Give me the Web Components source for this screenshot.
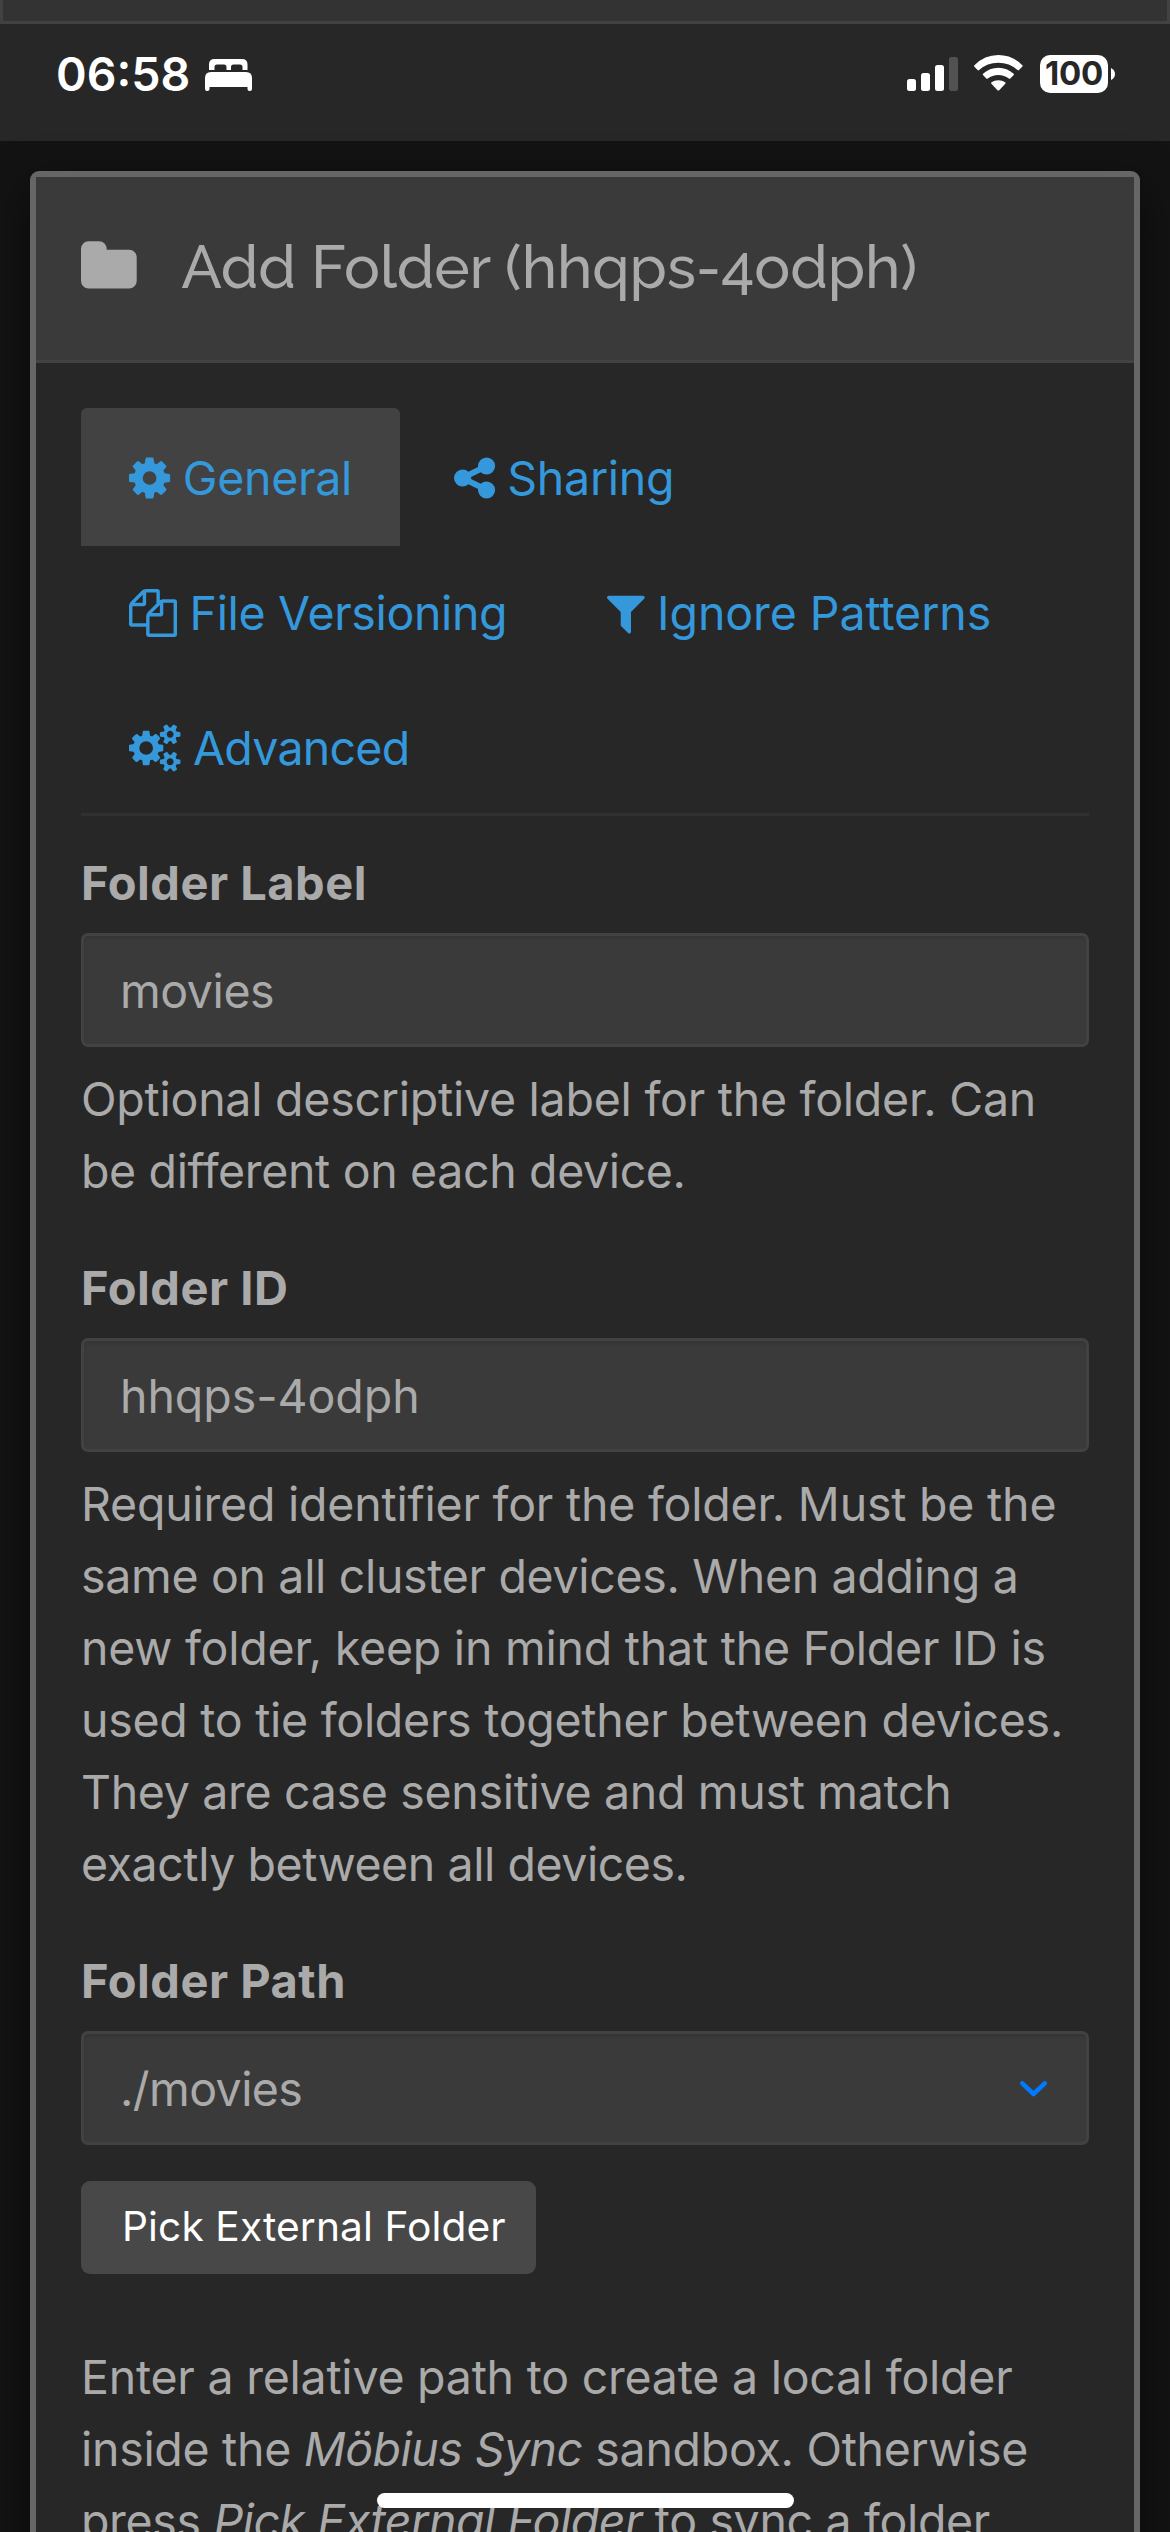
<!DOCTYPE html>
<html lang="en">
<head>
<meta charset="utf-8">
<title>Add Folder</title>
<style>
html,body{margin:0;padding:0;background:#131313;}
body{width:1170px;height:2532px;overflow:hidden;font-family:Inter,"Liberation Sans",sans-serif;font-size:46.5px;line-height:72px;color:#aaa;}
</style>
</head>
<body>
<app-screen>
  <status-bar slot="status" time="06:58" battery="100"></status-bar>
  <modal-dialog>
    <modal-title slot="title">Add Folder (hhqps-4odph)</modal-title>
    <tab-list>
      <tab-item icon="cog" active style="--ls:-.28px">General</tab-item>
      <tab-item icon="share" style="--ls:-.27px">Sharing</tab-item>
      <tab-item icon="files" style="--ls:-.35px;margin-right:4px">File Versioning</tab-item>
      <tab-item icon="filter" style="--ls:-.08px">Ignore Patterns</tab-item>
      <tab-item icon="cogs" style="--ls:-.75px">Advanced</tab-item>
    </tab-list>
    <form-group label="Folder Label">
      <text-field style="letter-spacing:-.42px">movies</text-field>
      <help-line slot="help" style="letter-spacing:-.25px">Optional descriptive label for the folder. Can</help-line>
      <help-line slot="help" style="letter-spacing:-.36px">be different on each device.</help-line>
    </form-group>
    <form-group label="Folder ID">
      <text-field style="letter-spacing:-.06px">hhqps-4odph</text-field>
      <help-line slot="help" style="letter-spacing:-.22px">Required identifier for the folder. Must be the</help-line>
      <help-line slot="help" style="letter-spacing:-.33px">same on all cluster devices. When adding a</help-line>
      <help-line slot="help" style="letter-spacing:-.23px">new folder, keep in mind that the Folder ID is</help-line>
      <help-line slot="help" style="letter-spacing:-.28px">used to tie folders together between devices.</help-line>
      <help-line slot="help" style="letter-spacing:-.32px">They are case sensitive and must match</help-line>
      <help-line slot="help" style="letter-spacing:-.44px">exactly between all devices.</help-line>
    </form-group>
    <form-group label="Folder Path">
      <text-field dropdown style="letter-spacing:-.57px">./movies</text-field>
      <push-button>Pick External Folder</push-button>
      <help-line slot="help" style="letter-spacing:-.24px">Enter a relative path to create a local folder</help-line>
      <help-line slot="help" style="letter-spacing:-.3px">inside the <i style="letter-spacing:-.55px">Möbius Sync</i> sandbox. Otherwise</help-line>
      <help-line slot="help" style="letter-spacing:-.35px">press <i style="letter-spacing:-.48px">Pick External Folder</i> to sync a folder</help-line>
    </form-group>
  </modal-dialog>
  <home-indicator slot="home"></home-indicator>
</app-screen>
<script>
const define = (name, render) => customElements.define(name, class extends HTMLElement {
  constructor() { super(); this.attachShadow({ mode: 'open' }); }
  connectedCallback() { this.shadowRoot.innerHTML = render(this); }
});

// Icons on a 1792-unit em, baseline at 1536: [x origin, advance, path]
const ICONS = {
  folder: [64, 1664, 'M1728 608v704q0 92-66 158t-158 66h-1216q-92 0-158-66t-66-158v-960q0-92 66-158t158-66h320q92 0 158 66t66 158v32h672q92 0 158 66t66 158z'],
  cog: [128, 1536, 'M1152 896q0-106-75-181t-181-75-181 75-75 181 75 181 181 75 181-75 75-181zm512-109v222q0 12-8 23t-20 13l-185 28q-19 54-39 91 35 50 107 138 10 12 10 25t-9 23q-27 37-99 108t-94 71q-12 0-26-9l-138-108q-44 23-91 38-16 136-29 186-7 28-36 28h-222q-14 0-24.5-8.5t-11.5-21.5l-28-184q-49-16-90-37l-141 107q-10 9-25 9-14 0-25-11-126-114-165-168-7-10-7-23 0-12 8-23 15-21 51-66.5t54-70.5q-27-50-41-99l-183-27q-13-2-21-12.5t-8-23.5v-222q0-12 8-23t19-13l186-28q14-46 39-92-40-57-107-138-10-12-10-24 0-10 9-23 26-36 98.5-107.5t94.5-71.5q13 0 26 10l138 107q44-23 91-38 16-136 29-186 7-28 36-28h222q14 0 24.5 8.5t11.5 21.5l28 184q49 16 90 37l142-107q9-9 24-9 13 0 25 10 129 119 165 170 7 8 7 22 0 12-8 23-15 21-51 66.5t-54 70.5q26 50 41 98l183 28q13 2 21 12.5t8 23.5z'],
  share: [128, 1536, 'M1344 1024q133 0 226.5 93.5t93.5 226.5-93.5 226.5-226.5 93.5-226.5-93.5-93.5-226.5q0-12 2-34l-360-180q-92 86-218 86-133 0-226.5-93.5t-93.5-226.5 93.5-226.5 226.5-93.5q126 0 218 86l360-180q-2-22-2-34 0-133 93.5-226.5t226.5-93.5 226.5 93.5 93.5 226.5-93.5 226.5-226.5 93.5q-126 0-218-86l-360 180q2 22 2 34t-2 34l360 180q92-86 218-86z'],
  files: [0, 1792, 'M1696 384q40 0 68 28t28 68v1216q0 40-28 68t-68 28h-960q-40 0-68-28t-28-68v-288h-544q-40 0-68-28t-28-68v-672q0-40 20-88t48-76l408-408q28-28 76-48t88-20h416q40 0 68 28t28 68v328q68-40 128-40h416zm-544 213l-299 299h299v-299zm-640-384l-299 299h299v-299zm196 647l316-316v-416h-384v416q0 40-28 68t-68 28h-416v640h512v-256q0-40 20-88t48-76zm956 804v-1152h-384v416q0 40-28 68t-68 28h-416v640h896z'],
  filter: [192, 1408, 'M1595 295q17 41-14 70l-493 493v742q0 42-39 59-13 5-25 5-27 0-45-19l-256-256q-19-19-19-45v-486l-493-493q-31-29-14-70 17-39 59-39h1280q42 0 59 39z'],
  cogs: [0, 1920, 'M896 896q0-106-75-181t-181-75-181 75-75 181 75 181 181 75 181-75 75-181zm768 512q0-52-38-90t-90-38-90 38-38 90q0 53 37.5 90.5t90.5 37.5 90.5-37.5 37.5-90.5zm0-1024q0-52-38-90t-90-38-90 38-38 90q0 53 37.5 90.5t90.5 37.5 90.5-37.5 37.5-90.5zm-384 421v185q0 10-7 19.5t-16 10.5l-155 24q-11 35-32 76 34 48 90 115 7 11 7 20 0 12-7 19-23 30-82.5 89.5t-78.5 59.5q-11 0-21-7l-115-90q-37 19-77 31-11 108-23 155-7 24-30 24h-186q-11 0-20-7.5t-10-17.5l-23-153q-34-10-75-31l-118 89q-7 7-20 7-11 0-21-8-144-133-144-160 0-9 7-19 10-14 41-53t47-61q-23-44-35-82l-152-24q-10-1-17-9.5t-7-19.5v-185q0-10 7-19.5t16-10.5l155-24q11-35 32-76-34-48-90-115-7-11-7-20 0-12 7-20 22-30 82-89t79-59q11 0 21 7l115 90q34-18 77-32 11-108 23-154 7-24 30-24h186q11 0 20 7.5t10 17.5l23 153q34 10 75 31l118-89q8-7 20-7 11 0 21 8 144 133 144 160 0 8-7 19-12 16-42 54t-45 60q23 48 34 82l152 23q10 2 17 10.5t7 19.5zm640 533v140q0 16-149 31-12 27-30 52 51 113 51 138 0 4-4 7-122 71-124 71-8 0-46-47t-52-68q-20 2-30 2t-30-2q-14 21-52 68t-46 47q-2 0-124-71-4-3-4-7 0-25 51-138-18-25-30-52-149-15-149-31v-140q0-16 149-31 13-29 30-52-51-113-51-138 0-4 4-7 4-2 35-20t59-34 30-16q8 0 46 46.5t52 67.5q20-2 30-2t30 2q51-71 92-112l6-2q4 0 124 70 4 3 4 7 0 25-51 138 17 23 30 52 149 15 149 31zm0-1024v140q0 16-149 31-12 27-30 52 51 113 51 138 0 4-4 7-122 71-124 71-8 0-46-47t-52-68q-20 2-30 2t-30-2q-14 21-52 68t-46 47q-2 0-124-71-4-3-4-7 0-25 51-138-18-25-30-52-149-15-149-31v-140q0-16 149-31 13-29 30-52-51-113-51-138 0-4 4-7 4-2 35-20t59-34 30-16q8 0 46 46.5t52 67.5q20-2 30-2t30 2q51-71 92-112l6-2q4 0 124 70 4 3 4 7 0 25-51 138 17 23 30 52 149 15 149 31z'],
};
const icon = (name, size) => {
  const [x, w, d] = ICONS[name];
  return `<svg width="${w / 1792 * size}" height="${size}" viewBox="${x} 0 ${w} 1792" fill="currentColor" overflow="visible"><path d="${d}"/></svg>`;
};

define('app-screen', () => `<style>
  :host{display:flex;flex-direction:column;position:relative;width:1170px;height:2532px;overflow:hidden;background:#131313}
  .page{flex:none;height:141px;box-sizing:border-box;background:#272727;display:flex;flex-direction:column}
  .panel{flex:none;height:24px;box-sizing:border-box;background:#333;border:3px solid #424242;border-top:0}
  main{padding:30px 30px 0;display:flex;flex-direction:column}
</style><div class="page"><div class="panel"></div><slot name="status"></slot></div><main><slot></slot></main><slot name="home"></slot>`);

define('status-bar', el => `<style>
  :host{display:flex;align-items:flex-start;color:#fff;height:117px;padding:31px 55px 0 56px;box-sizing:border-box}
  .time{font-size:46.5px;font-weight:600;line-height:38px;width:149px}
  .sp{flex:1}
  svg{display:block;flex:none}
  .bed{margin-top:4px}
  .signal{margin-top:2px}
  .wifi{margin:0 17px 0 16.5px}
  .batt{display:flex;align-items:center;gap:3px}
  .cell{width:68px;height:38px;border-radius:10px;background:#fff;color:#272727;font-weight:700;font-size:33px;line-height:37px;text-align:center;letter-spacing:-.3px}
</style>
<span class="time">${el.getAttribute('time')}</span>
<svg class="bed" width="47" height="32" viewBox="0 0 47 32" fill="#fff"><path d="M4 11V5.500Q4 0 9.500 0H37Q42.500 0 42.500 5.500V11H37.500V8Q37.500 5.500 35 5.500H28.500Q26 5.500 26 8V11H21.500V8Q21.500 5.500 19 5.500H12Q9.500 5.500 9.500 8V11Z"/><path d="M0 30V19Q0 13 6 13H41Q47 13 47 19V30Q47 32 45 32H44.500Q42.500 32 42.500 30V28H4.500V30Q4.500 32 2.500 32H2Q0 32 0 30Z"/></svg>
<span class="sp"></span>
<svg class="signal" width="51" height="34" viewBox="0 0 51 34" fill="#fff"><rect x="0" y="22" width="9" height="12" rx="2.500"/><rect x="14" y="16" width="9" height="18" rx="2.500"/><rect x="28" y="8" width="9" height="26" rx="2.500"/><rect x="42" y="0" width="9" height="34" rx="2.500" fill="#525252"/></svg>
<svg class="wifi" width="49" height="36" viewBox="0 0 49 36" fill="#fff"><path d="M.4 10.200Q10.500 0 24.300 0T48.300 10.200Q49 11 48.200 11.800L45 15.100Q44.300 15.800 43.500 15Q35.500 7.700 24.300 7.700T5.100 15Q4.400 15.800 3.600 15L.4 11.800Q-.3 11 .4 10.200Z"/><path d="M9 18.700Q15.500 12.700 24.300 12.700T39.700 18.700Q40.400 19.400 39.700 20.100L36.300 23.500Q35.600 24.200 34.800 23.500Q30.300 20 24.300 20T13.800 23.500Q13 24.200 12.300 23.500L9 20.100Q8.300 19.400 9 18.700Z"/><path d="M17.500 27.200Q20.300 25.200 24.300 25.200T31.200 27.200Q32 28 31.300 28.800L25.200 35.200Q24.300 36 23.500 35.200L17.400 28.800Q16.700 28 17.500 27.200Z"/></svg>
<div class="batt"><span class="cell">${el.getAttribute('battery')}</span><svg width="4" height="12" viewBox="0 0 4 12" fill="#fff"><path d="M0 0Q4 2 4 6T0 12Z"/></svg></div>`);

define('modal-dialog', () => `<style>
  :host{display:flex;flex-direction:column;height:2600px;flex:none;box-sizing:border-box;border:6px solid #666;border-radius:9px;background:#272727;box-shadow:0 15px 45px rgba(0,0,0,.5)}
  header{height:186px;flex:none;box-sizing:border-box;background:#3a3a3a;border-bottom:3px solid #424242;padding:0 45px 3px;display:flex;flex-direction:column;justify-content:center}
  section{padding:45px 45px 0;display:flex;flex-direction:column}
</style><header><slot name="title"></slot></header><section><slot></slot></section>`);

define('modal-title', () => `<style>
  :host{display:block;font:500 60px/72px Raleway,Lato,sans-serif;color:#aaa;white-space:nowrap;letter-spacing:-.15px}
  svg{vertical-align:-8.600px;margin-right:44.500px}
</style>${icon('folder', 60)}<slot></slot>`);

define('tab-list', () => `<style>
  :host{display:flex;flex-wrap:wrap;height:408px;box-sizing:border-box;align-content:flex-start;border-bottom:3px solid #303030}
</style><slot></slot>`);

define('tab-item', el => `<style>
  :host{display:block;box-sizing:border-box;height:138px;margin:0 6px -3px 0;padding:34px 47.500px 0 48px;border-radius:6px 6px 0 0;color:#3498db;white-space:nowrap;letter-spacing:var(--ls)}
  :host([active]){background:#424242}
  svg{vertical-align:-6.900px;margin-right:12.600px}
</style>${icon(el.getAttribute('icon'), 48)}<slot></slot>`);

define('form-group', el => `<style>
  :host{display:flex;flex-direction:column;margin-bottom:14px;padding-top:31px}
  label{font-size:47px;font-weight:700;letter-spacing:.5px;margin-bottom:14px}
  .help{display:flex;flex-direction:column;margin-top:16px}
</style><label>${el.getAttribute('label')}</label><slot></slot><div class="help"><slot name="help"></slot></div>`);

define('text-field', el => `<style>
  :host{display:flex;align-items:center;justify-content:space-between;box-sizing:border-box;height:114px;padding:2px 39px 0 36px;border:3px solid #424242;border-radius:7px;background:#3a3a3a;box-shadow:inset 0 3px 3px rgba(0,0,0,.075)}
</style><span><slot></slot></span>${el.hasAttribute('dropdown') ? '<svg width="27" height="16" viewBox="0 0 27 16" fill="none" stroke="#007aff" stroke-width="4.500" stroke-linecap="round" stroke-linejoin="round"><path d="M2.300 2.300L13.500 13L24.700 2.300"/></svg>' : ''}`);

define('push-button', () => `<style>
  :host{display:block;align-self:flex-start;box-sizing:border-box;width:455px;height:93px;margin:36px 0 51px;padding:0 0 0 41px;border-radius:9px;background:#484848;color:#fff;font-size:40.700px;line-height:91px;letter-spacing:.1px;white-space:nowrap}
</style><slot></slot>`);

define('help-line', () => `<style>:host{display:block;white-space:nowrap;height:72px}</style><slot></slot>`);

define('home-indicator', () => `<style>:host{display:block;position:absolute;left:377px;top:2493px;width:417px;height:15px;border-radius:8px;background:#fff}</style>`);
</script>
</body>
</html>
